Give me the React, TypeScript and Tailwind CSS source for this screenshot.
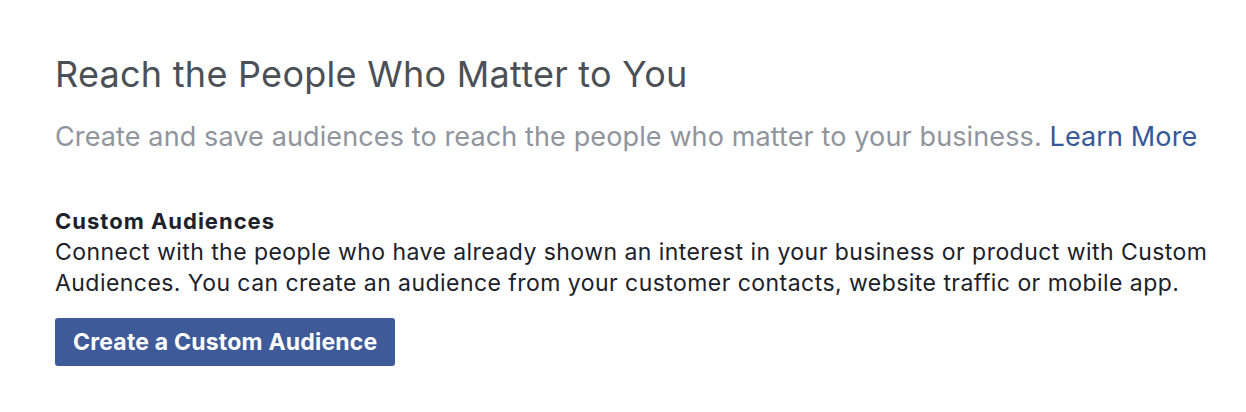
export default function App() {
  return (
    <div className="min-h-[412px] w-full bg-white font-['Inter',sans-serif]">
      <div className="pl-[55px] pr-[25px] pt-[52px]">
        <h1 className="text-[36px] leading-[44px] font-normal tracking-[0.27px] text-[#4b4f56]">
          Reach the People Who Matter to You
        </h1>
        <p className="mt-[24px] text-[27px] leading-[34px] tracking-[0.12px] text-[#90949c]">
          Create and save audiences to reach the people who matter to your business.{" "}
          <a className="text-[#365899]">Learn More</a>
        </p>

        <div className="mt-[51px]">
          <h2 className="text-[22px] leading-[32px] font-bold tracking-[1px] text-[#1d2129]">Custom Audiences</h2>
          <p className="text-[23px] leading-[31px] tracking-[0.45px] text-[#1d2129]">
            Connect with the people who have already shown an interest in your business or product with Custom
            Audiences. You can create an audience from your customer contacts, website traffic or mobile app.
          </p>
          <button className="mt-[19px] h-[48px] rounded-[3px] bg-[#3e5a98] px-[18px] text-[23px] font-bold tracking-[0.2px] text-white">
            Create a Custom Audience
          </button>
        </div>
      </div>
    </div>
  );
}
